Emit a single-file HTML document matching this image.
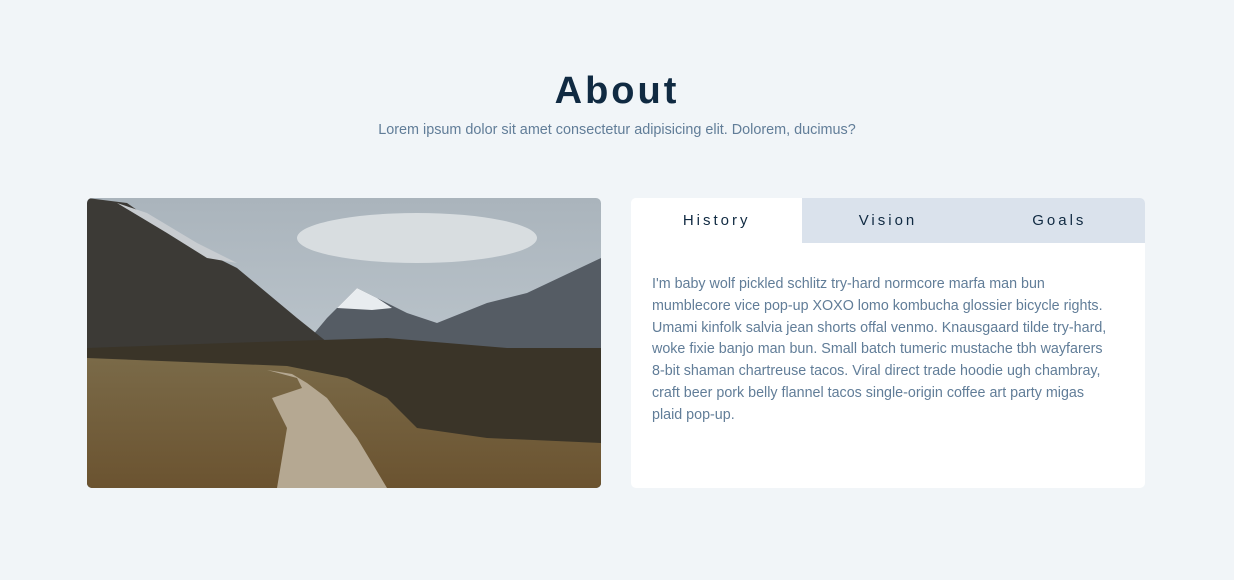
<!DOCTYPE html>
<html><head><meta charset="utf-8"><style>
*{margin:0;padding:0;box-sizing:border-box}
body{width:1234px;height:580px;background:#f1f5f8;font-family:"Liberation Sans",sans-serif;position:relative;overflow:hidden}
h1{position:absolute;top:70px;left:0;width:1234px;text-align:center;font-size:38px;font-weight:700;letter-spacing:3px;color:#102a42}
.sub{position:absolute;top:122px;left:0;width:1234px;text-align:center;font-size:14.4px;color:#617d98}
.img{position:absolute;left:87px;top:198px;width:514px;height:290px;border-radius:5px;overflow:hidden}
.card{position:absolute;left:631px;top:198px;width:514px;height:290px;background:#fff;border-radius:5px;overflow:hidden}
.tabs{display:flex;height:45px}
.tab{width:171.33px;background:#dae2ec;text-align:center;line-height:45px;font-size:15px;letter-spacing:3px;color:#102a42}
.tab.a{background:#fff}
.txt{position:absolute;left:21px;top:76px;width:461px;font-size:14.3px;line-height:21.8px;color:#617d98}
</style></head><body>
<h1>About</h1>
<div class="sub">Lorem ipsum dolor sit amet consectetur adipisicing elit. Dolorem, ducimus?</div>
<div class="img"><svg width="514" height="290" viewBox="0 0 514 290">
<defs><linearGradient id="s" x1="0" y1="0" x2="0" y2="1"><stop offset="0" stop-color="#aab4bc"/><stop offset="1" stop-color="#c9d2d8"/></linearGradient>
<linearGradient id="g" x1="0" y1="0" x2="0" y2="1"><stop offset="0" stop-color="#7a6a48"/><stop offset="1" stop-color="#6b5330"/></linearGradient></defs>
<rect width="514" height="290" fill="url(#s)"/>
<ellipse cx="330" cy="40" rx="120" ry="25" fill="#d8dde0"/>
<path d="M215 150 L240 120 L270 90 L290 100 L320 115 L350 125 L400 105 L440 95 L514 60 L514 170 L215 170Z" fill="#555c64"/>
<path d="M250 110 L270 90 L290 100 L305 110 L285 112 Z" fill="#e8ecef"/>
<path d="M0 0 L40 5 L90 40 L150 70 L210 120 L260 160 L0 175Z" fill="#3c3a36"/>
<path d="M30 5 L60 15 L110 45 L150 65 L120 60 L80 35Z" fill="#c8ccd0"/>
<path d="M0 150 L140 145 L300 140 L420 150 L514 150 L514 290 L0 290Z" fill="#3a3428"/>
<path d="M0 160 L200 168 L260 180 L300 200 L330 230 L400 240 L514 245 L514 290 L0 290Z" fill="url(#g)"/>
<path d="M180 172 L210 180 L215 190 L185 200 L200 230 L190 290 L300 290 L270 240 L240 200 L220 185 L205 176Z" fill="#b5a892"/>
</svg></div>
<div class="card">
<div class="tabs"><div class="tab a">History</div><div class="tab">Vision</div><div class="tab">Goals</div></div>
<div class="txt">I'm baby wolf pickled schlitz try-hard normcore marfa man bun mumblecore vice pop-up XOXO lomo kombucha glossier bicycle rights. Umami kinfolk salvia jean shorts offal venmo. Knausgaard tilde try-hard, woke fixie banjo man bun. Small batch tumeric mustache tbh wayfarers 8-bit shaman chartreuse tacos. Viral direct trade hoodie ugh chambray, craft beer pork belly flannel tacos single-origin coffee art party migas plaid pop-up.</div>
</div>
</body></html>
